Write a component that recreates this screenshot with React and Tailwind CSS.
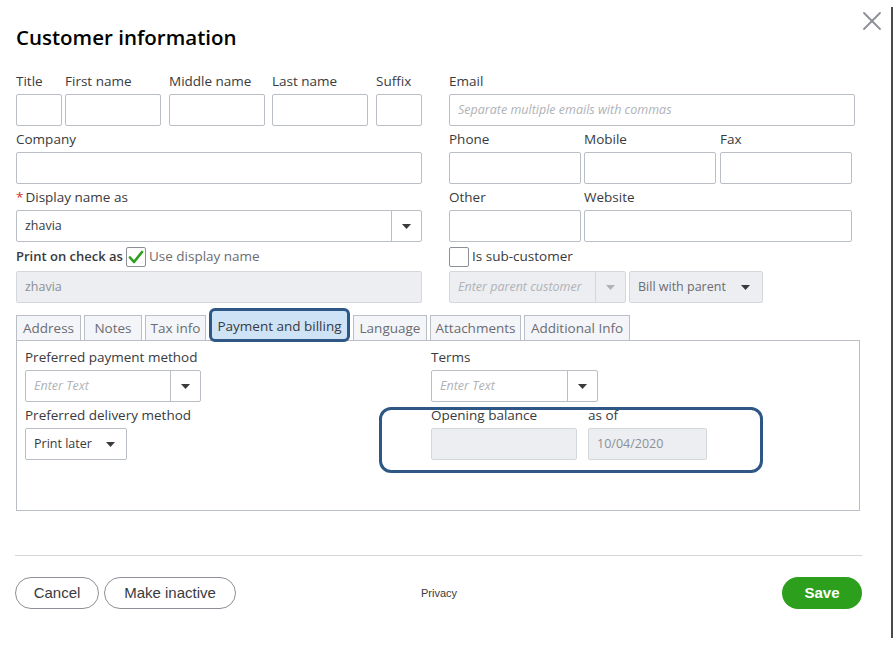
import React from 'react';
import { X } from 'lucide-react';

const FONT = { fontFamily: '"Open Sans", "Noto Sans", Arial, sans-serif' };
const NARROW = { fontFamily: '"Liberation Sans", Arial, sans-serif' };

const Caret = ({ muted }) => (
    <svg width="9" height="5" viewBox="0 0 9 5">
        <path d="M0 0h9L4.5 5z" fill={muted ? '#b0b2b7' : '#393a3d'} />
    </svg>
);

const Label = ({ children, className = '' }) => (
    <div className={`h-[20px] leading-[20px] text-[13.5px] text-[#393a3d] whitespace-nowrap ${className}`}>{children}</div>
);

const Input = ({ className = '', value, placeholder, disabled }) => (
    <div
        className={`h-[32px] border rounded-[2px] flex items-center px-[8px] text-[12.5px] ${disabled ? 'bg-[#eceef1] border-[#d4d7dc] text-[#8d9096]' : 'bg-white border-[#babec5] text-[#393a3d]'} ${className}`}
    >
        {value}
        {placeholder && <span className="italic text-[#b0b2b7] whitespace-nowrap overflow-hidden">{placeholder}</span>}
    </div>
);

const Select = ({ className = '', value, placeholder, disabled, btn = 'w-[30px]' }) => (
    <div className={`h-[32px] border rounded-[2px] flex ${disabled ? 'bg-[#eceef1] border-[#d4d7dc]' : 'bg-white border-[#babec5]'} ${className}`}>
        <div className="flex-1 flex items-center px-[8px] text-[12.5px] text-[#393a3d] overflow-hidden whitespace-nowrap">
            {value}
            {placeholder && <span className="italic text-[#b0b2b7]">{placeholder}</span>}
        </div>
        <div className={`${btn} border-l ${disabled ? 'border-[#d4d7dc]' : 'border-[#babec5]'} flex items-center justify-center`}>
            <Caret muted={disabled} />
        </div>
    </div>
);

const Field = ({ label, className = '', children }) => (
    <div className={`flex flex-col gap-[3px] ${className}`}>
        <Label>{label}</Label>
        {children}
    </div>
);

const Checkbox = ({ checked }) => (
    <div className="w-[20px] h-[20px] border border-[#8d9096] rounded-[2px] bg-white flex items-center justify-center">
        {checked && (
            <svg width="16" height="14" viewBox="0 0 16 14">
                <path d="M2 7.5l4 4.5 8-10" fill="none" stroke="#2ca01c" strokeWidth="2.6" strokeLinecap="round" strokeLinejoin="round" />
            </svg>
        )}
    </div>
);

const TABS = [
    { name: 'Address', w: 'w-[65px]' },
    { name: 'Notes', w: 'w-[58px]' },
    { name: 'Tax info', w: 'w-[61px]' },
    { name: 'Payment and billing', w: 'w-[141px]', active: true },
    { name: 'Language', w: 'w-[74px]' },
    { name: 'Attachments', w: 'w-[91px]' },
    { name: 'Additional Info', w: 'w-[106px]' },
];

const Tabs = () => (
    <div className="flex h-[32px] gap-[3px] mt-[5px]">
        {TABS.map((t) =>
            t.active ? (
                <div
                    key={t.name}
                    className={`${t.w} h-[34px] relative z-10 bg-[#cfe3f7] border-[3px] border-[#2f5785] rounded-[6px] flex items-center justify-center pt-[2px] text-[13.5px] text-[#393a3d] whitespace-nowrap`}
                >
                    {t.name}
                </div>
            ) : (
                <div
                    key={t.name}
                    className={`${t.w} h-[25px] mt-[7px] bg-[#f4f5f8] border border-b-0 border-[#babec5] flex items-center justify-center text-[13.5px] text-[#6b6c72] whitespace-nowrap`}
                >
                    {t.name}
                </div>
            )
        )}
    </div>
);

const PaymentPanel = () => (
    <div className="relative w-[844px] h-[171px] border border-[#babec5] pl-[8px] pt-[6px] flex">
        <div className="w-[406px] flex flex-col gap-[3px]">
            <Field label="Preferred payment method">
                <Select className="w-[176px]" placeholder="Enter Text" />
            </Field>
            <Field label="Preferred delivery method">
                <div className="w-[102px] h-[32px] border border-[#babec5] rounded-[2px] flex items-center pl-[8px] gap-[14px] text-[12.5px] text-[#393a3d]">
                    Print later
                    <Caret />
                </div>
            </Field>
        </div>
        <div className="flex flex-col gap-[3px]">
            <Field label="Terms">
                <Select className="w-[167px]" placeholder="Enter Text" />
            </Field>
            <div className="flex gap-[11px]">
                <Field label="Opening balance">
                    <Input className="w-[146px]" disabled />
                </Field>
                <Field label="as of">
                    <Input className="w-[119px]" disabled value="10/04/2020" />
                </Field>
            </div>
        </div>
        {/* outline around the opening balance block */}
        <div className="absolute left-[362px] top-[66px] w-[384px] h-[66px] border-[3px] border-[#2f5785] rounded-[12px] pointer-events-none" />
    </div>
);

export default function App() {
    return (
        <div className="w-[896px] h-[648px] bg-white flex overflow-hidden" style={FONT}>
            <div className="w-[891px] relative pl-[16px] pt-[23px]">
                <button className="absolute top-[5px] right-[3px] text-[#8d9096]">
                    <X size={32} strokeWidth={1.4} />
                </button>
                <h1 className="h-[28px] leading-[28px] text-[20.5px] font-semibold text-[#000]">Customer information</h1>

                <div className="mt-[20px] flex gap-[27px]">
                    {/* left column */}
                    <div className="w-[406px] flex flex-col gap-[3px]">
                        <div className="flex">
                            <Field label="Title"><Input className="w-[46px]" /></Field>
                            <Field label="First name" className="ml-[3px]"><Input className="w-[96px]" /></Field>
                            <Field label="Middle name" className="ml-[8px]"><Input className="w-[96px]" /></Field>
                            <Field label="Last name" className="ml-[7px]"><Input className="w-[96px]" /></Field>
                            <Field label="Suffix" className="ml-[8px]"><Input className="w-[46px]" /></Field>
                        </div>
                        <Field label="Company"><Input /></Field>
                        <Field label={<><span className="text-[#d52b1e] mr-[2px]">*</span>Display name as</>}>
                            <Select value="zhavia" />
                        </Field>
                        <div className="h-[23px] flex items-center gap-[3px] text-[13.5px]">
                            <span className="text-[#393a3d] font-semibold text-[13px]">Print on check as</span>
                            <Checkbox checked />
                            <span className="text-[#6b6c72]">Use display name</span>
                        </div>
                        <Input disabled value="zhavia" />
                    </div>

                    {/* right column */}
                    <div className="w-[406px] flex flex-col gap-[3px]">
                        <Field label="Email">
                            <Input placeholder="Separate multiple emails with commas" />
                        </Field>
                        <div className="flex">
                            <Field label="Phone"><Input className="w-[132px]" /></Field>
                            <Field label="Mobile" className="ml-[3px]"><Input className="w-[132px]" /></Field>
                            <Field label="Fax" className="ml-[4px]"><Input className="w-[132px]" /></Field>
                        </div>
                        <div className="flex">
                            <Field label="Other"><Input className="w-[132px]" /></Field>
                            <Field label="Website" className="ml-[3px]"><Input className="w-[268px]" /></Field>
                        </div>
                        <div className="h-[23px] flex items-center gap-[3px] text-[13.5px] text-[#393a3d]">
                            <Checkbox />
                            <span>Is sub-customer</span>
                        </div>
                        <div className="flex gap-[3px]">
                            <Select className="w-[177px]" disabled placeholder="Enter parent customer" />
                            <div className="w-[134px] h-[32px] bg-[#eceef1] border border-[#d4d7dc] rounded-[2px] flex items-center justify-between pl-[8px] pr-[12px] text-[12.5px] text-[#6b6c72]">
                                Bill with parent
                                <Caret />
                            </div>
                        </div>
                    </div>
                </div>

                <Tabs />
                <PaymentPanel />

                <div className="mt-[44px] -ml-[1px] w-[847px] h-px bg-[#d4d7dc]" />

                <div className="mt-[21px] -ml-[1px] w-[847px] flex items-center" style={NARROW}>
                    <button className="w-[84px] h-[32px] rounded-full border border-[#8d9096] text-[15px] text-[#393a3d]">Cancel</button>
                    <button className="ml-[5px] w-[132px] h-[32px] rounded-full border border-[#8d9096] text-[15px] text-[#393a3d]">Make inactive</button>
                    <span className="ml-[185px] text-[11px] text-[#393a3d]">Privacy</span>
                    <button className="ml-auto w-[80px] h-[32px] rounded-full bg-[#2ca01c] text-[15px] font-bold text-white">Save</button>
                </div>
            </div>
            <div className="w-[2px] mt-[7px] h-[631px] bg-[#4a4a4a]" />
        </div>
    );
}
